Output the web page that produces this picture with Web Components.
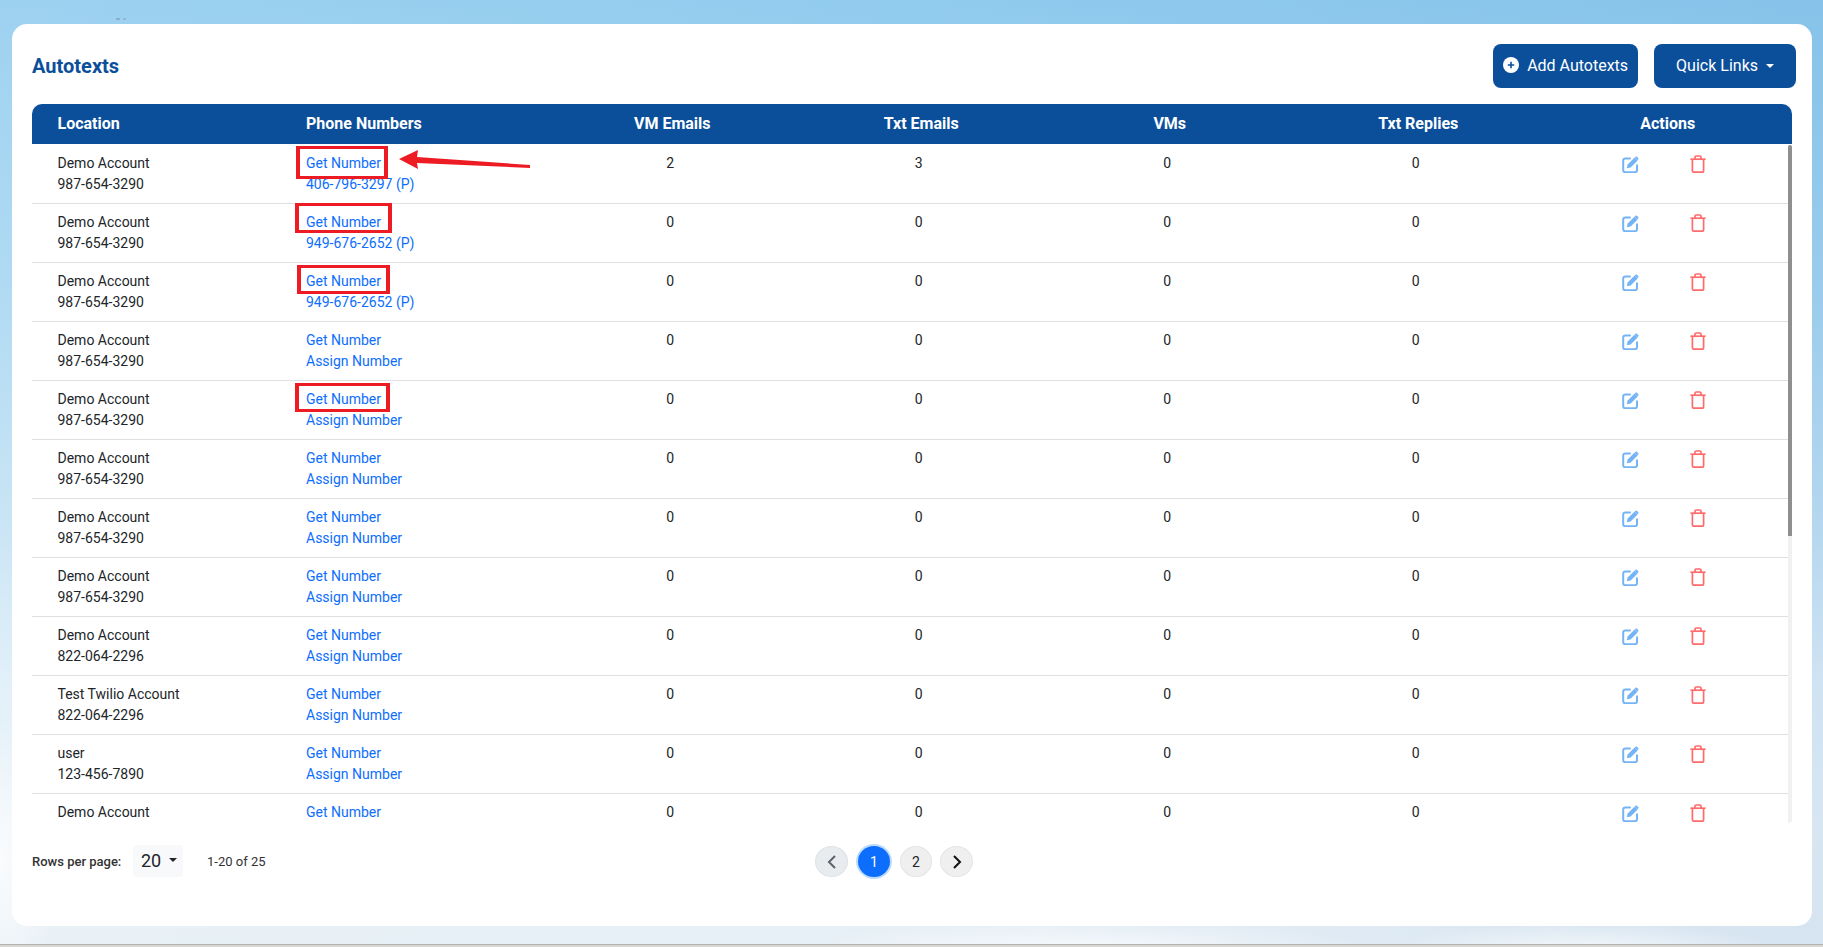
<!DOCTYPE html>
<html>
<head>
<meta charset="utf-8">
<title>Autotexts</title>
<style>
html, body { margin: 0; height: 100%; }
body {
  height: 947px;
  overflow: hidden;
  font-family: Roboto, "Liberation Sans", sans-serif;
  color: #212529;
  background:
    linear-gradient(#b3b3b0, #b3b3b0) 0 944px / 100% 1px no-repeat,
    linear-gradient(#d9d7d3, #d9d7d3) 0 945px / 100% 2px no-repeat,
    linear-gradient(rgba(120,140,160,.5), rgba(120,140,160,.5)) 116px 18px / 4px 2px no-repeat,
    linear-gradient(rgba(120,140,160,.35), rgba(120,140,160,.35)) 123px 18px / 3px 2px no-repeat,
    radial-gradient(ellipse 60px 140px at 0 860px, rgba(255,255,255,.75), rgba(255,255,255,0)),
    radial-gradient(ellipse 300px 30px at 1080px 950px, rgba(255,255,255,.7), rgba(255,255,255,0)),
    radial-gradient(ellipse 200px 26px at 1580px 950px, rgba(255,255,255,.7), rgba(255,255,255,0)),
    linear-gradient(90deg, rgba(255,255,255,.12), rgba(255,255,255,0) 50%, rgba(0,80,170,.07)),
    linear-gradient(180deg, #90cbee 0%, #a5d5f1 30%, #c2e1f4 55%, #deeef8 72%, #e8f1f7 88%, #e6eff6 100%);
}
</style>
</head>
<body>
<at-page>
  <at-card>
    <at-toolbar heading="Autotexts">
      <at-button slot="actions" icon="plus">Add Autotexts</at-button>
      <at-button slot="actions" caret wide>Quick Links</at-button>
    </at-toolbar>
    <at-table id="table"></at-table>
    <at-pager></at-pager>
  </at-card>
</at-page>

<template id="row-tpl">
  <style>
    :host {
      display: grid;
      grid-template-columns: 243.5px repeat(6, 248.5px);
      box-sizing: border-box;
      height: 59px;
      position: relative;
      border-bottom: 1px solid #dfdfe4;
      font-size: 14px;
      line-height: 21px;
    }
    .cell { padding: 8px 0 0 25.5px; }
    .cell + .cell { padding-left: 30.5px; }
    .num { padding: 8px 0 0 44px; text-align: center; }
    .actions { padding: 11px 0 0 104px; display: flex; gap: 52px; align-items: flex-start; }
    a { color: #0d6efd; text-decoration: none; display: block; }
    svg { display: block; }
  </style>
  <div class="cell"><div id="loc"></div><div id="ph"></div></div>
  <div class="cell"><a id="get">Get Number</a><a id="second"></a></div>
  <div class="num" id="vm"></div>
  <div class="num" id="txt"></div>
  <div class="num" id="vms"></div>
  <div class="num" id="rep"></div>
  <div class="actions">
    <svg width="17" height="17" viewBox="0 0 17 17" fill="none" style="margin-left:-.5px">
      <path d="M8 2.4H3.2a2 2 0 0 0-2 2v9.8a2 2 0 0 0 2 2H13a2 2 0 0 0 2-2V9.2" stroke="#74b4f6" stroke-width="2" stroke-linecap="round"/>
      <path d="M4.8 12.2l.8-3.8 7-7 3 3-7 7z" fill="#74b4f6"/>
      <path d="M13.4 .8a1.1 1.1 0 0 1 1.5 0l1.3 1.3a1.1 1.1 0 0 1 0 1.5l-.6.6-2.8-2.8z" fill="#74b4f6"/>
    </svg>
    <svg width="16" height="18" viewBox="0 0 16 18" fill="none" stroke="#ff6b6b" stroke-width="1.7" style="margin-top:-1px;margin-left:-.5px">
      <path d="M.4 4.2h15.2"/>
      <path d="M5 4V2.2A1.2 1.2 0 0 1 6.2 1h3.6A1.2 1.2 0 0 1 11 2.2V4"/>
      <path d="M2.4 4.2v11.6a1.4 1.4 0 0 0 1.4 1.4h8.4a1.4 1.4 0 0 0 1.4-1.4V4.2"/>
    </svg>
  </div>
  <slot></slot>
</template>

<script>
function shadow(el, html) {
  const root = el.attachShadow({mode: 'open'});
  root.innerHTML = html;
  return root;
}

class AtPage extends HTMLElement {
  constructor() {
    super();
    shadow(this, `<style>:host { display: block; padding: 24px 11px 0 12px; }</style><slot></slot>`);
  }
}

class AtCard extends HTMLElement {
  constructor() {
    super();
    shadow(this, `<style>
      :host {
        display: block;
        box-sizing: border-box;
        height: 902px;
        padding: 20px 20px 0 20px;
        background: #fff;
        border-radius: 15px;
      }
    </style><slot></slot>`);
  }
}

class AtToolbar extends HTMLElement {
  connectedCallback() {
    shadow(this, `<style>
      :host { display: flex; align-items: center; justify-content: space-between; height: 44px; margin: 0 -4px 16px 0; }
      h1 { margin: 0; font-size: 20px; font-weight: 700; color: #0b4f9b; }
      div { display: flex; gap: 16px; }
    </style><h1>${this.getAttribute('heading')}</h1><div><slot name="actions"></slot></div>`);
  }
}

class AtButton extends HTMLElement {
  connectedCallback() {
    const plus = this.getAttribute('icon') === 'plus' ? `<svg width="16" height="16" viewBox="0 0 16 16"><circle cx="8" cy="8" r="8" fill="#fff"/><path d="M8 4.8v6.4M4.8 8h6.4" stroke="#0b4f9b" stroke-width="1.6"/></svg>` : '';
    const caret = this.hasAttribute('caret') ? `<i></i>` : '';
    shadow(this, `<style>
      :host {
        display: inline-flex;
        align-items: center;
        box-sizing: border-box;
        height: 44px;
        padding: 0 10px 2px;
        gap: 8px;
        background: #0b4f9b;
        color: #fff;
        font-size: 16px;
        border-radius: 8px;
      }
      :host([wide]) { padding: 0 22px 2px; }
      i { width: 0; height: 0; margin-top: 2px; border: 4.5px solid transparent; border-top-color: #fff; border-bottom: 0; }
    </style>${plus}<slot></slot>${caret}`);
  }
}

class AtTable extends HTMLElement {
  constructor() {
    super();
    const titles = ['VM Emails', 'Txt Emails', 'VMs', 'Txt Replies', 'Actions'];
    shadow(this, `<style>
      :host { display: block; position: relative; width: 1760px; font-size: 16px; }
      .head {
        display: grid;
        grid-template-columns: 243.5px repeat(6, 248.5px);
        box-sizing: border-box;
        height: 40px;
        line-height: 39px;
        background: #0b4f9b;
        color: #fff;
        font-weight: 700;
        border-radius: 10px 10px 0 0;
      }
      .head span { padding-left: 25.5px; }
      .head span + span { padding-left: 30.5px; }
      .head span.c { padding-left: 49px; text-align: center; }
      .head span.c:first-of-type { padding-left: 48px; }
      .head span.c:nth-child(3) { padding-left: 48px; }
      .head span.c:last-child { padding-left: 51px; }
      .body { height: 678px; margin-top: 1px; overflow: hidden; }
      .track {
        position: absolute; right: 0; top: 41px; bottom: 0; width: 4px;
        background: #f1f1f1; border-radius: 0 0 8px 0;
      }
      .thumb { height: 391px; background: #8f8f8f; border-radius: 2px 2px 0 0; }
    </style>
    <div class="head"><span>Location</span><span>Phone Numbers</span>${titles.map(t => `<span class="c">${t}</span>`).join('')}</div>
    <div class="body"><slot></slot></div>
    <div class="track"><div class="thumb"></div></div>`);
  }
}

class AtRow extends HTMLElement {
  connectedCallback() {
    const root = this.attachShadow({mode: 'open'});
    root.appendChild(document.getElementById('row-tpl').content.cloneNode(true));
    const set = (id, name, dflt) => { root.getElementById(id).textContent = this.getAttribute(name) || dflt; };
    set('loc', 'location', 'Demo Account');
    set('ph', 'phone', '987-654-3290');
    set('second', 'second', 'Assign Number');
    set('vm', 'vm', '0');
    set('txt', 'txt', '0');
    set('vms', 'vms', '0');
    set('rep', 'rep', '0');
  }
}

class AtMark extends HTMLElement {
  constructor() {
    super();
    shadow(this, `<style>
      :host { position: absolute; display: block; box-sizing: border-box; border: solid #ed1c24; border-width: 3px 4px; }
    </style>`);
  }
}

class AtPager extends HTMLElement {
  constructor() {
    super();
    shadow(this, `<style>
      :host { display: block; position: relative; height: 32px; margin-top: 22px; font-size: 13px; }
      .left { display: flex; align-items: center; height: 32px; }
      .label { font-weight: 500; color: #333; width: 101px; }
      .select {
        display: flex; align-items: center; gap: 8px; box-sizing: border-box;
        width: 50px; height: 32px; padding: 0 0 2px 8px;
        background: #f8f9fa; border-radius: 4px; font-size: 18px; color: #212529;
      }
      .select i { width: 0; height: 0; border: 4px solid transparent; border-top-color: #212529; border-bottom: 0; }
      .count { margin-left: 24px; color: #333; }
      .pages { position: absolute; left: 783px; top: 1px; display: flex; }
      .pages span {
        display: flex; align-items: center; justify-content: center; box-sizing: border-box;
        width: 32px; height: 31px; border-radius: 50%;
        background: #efefef; border: 1px solid #e4e4e4; font-size: 14px; color: #212529;
      }
      .pages .prev { width: 33px; background: #e9ecef; border-color: #dee2e6; margin-right: 10px; }
      .pages .on {
        background: #0d6efd; border: 0; color: #fff; margin-right: 10px;
        box-shadow: 0 0 0 2px #bcdcfd;
      }
      .pages .two { margin-right: 8px; }
      .pages .next { width: 33px; }
    </style>
    <div class="left">
      <span class="label">Rows per page:</span>
      <div class="select">20<i></i></div>
      <span class="count">1-20 of 25</span>
    </div>
    <div class="pages">
      <span class="prev"><svg width="10" height="14" viewBox="0 0 10 14" fill="none" stroke="#5c636a" stroke-width="2"><path d="M8 1L2 7l6 6"/></svg></span>
      <span class="on">1</span>
      <span class="two">2</span>
      <span class="next"><svg width="10" height="14" viewBox="0 0 10 14" fill="none" stroke="#111" stroke-width="2"><path d="M2 1l6 6-6 6"/></svg></span>
    </div>`);
  }
}

customElements.define('at-page', AtPage);
customElements.define('at-card', AtCard);
customElements.define('at-toolbar', AtToolbar);
customElements.define('at-button', AtButton);
customElements.define('at-table', AtTable);
customElements.define('at-row', AtRow);
customElements.define('at-mark', AtMark);
customElements.define('at-pager', AtPager);

// rows shown in the first page of the list, marks are left/top/width/height inside the row
const rows = [
  {second: '406-796-3297 (P)', vm: '2', txt: '3', mark: [264, 1, 92, 33]},
  {second: '949-676-2652 (P)', mark: [263, -1, 97, 30]},
  {second: '949-676-2652 (P)', mark: [265, 2, 93, 29]},
  {},
  {mark: [263, 2, 95, 29]},
  {}, {}, {},
  {phone: '822-064-2296'},
  {location: 'Test Twilio Account', phone: '822-064-2296'},
  {location: 'user', phone: '123-456-7890'},
  {}
];
const table = document.getElementById('table');
rows.forEach((r, i) => {
  const row = document.createElement('at-row');
  for (const k of ['location', 'phone', 'second', 'vm', 'txt']) {
    if (r[k]) row.setAttribute(k, r[k]);
  }
  if (r.mark) {
    const m = document.createElement('at-mark');
    m.style.cssText = `left:${r.mark[0]}px;top:${r.mark[1]}px;width:${r.mark[2]}px;height:${r.mark[3]}px`;
    row.appendChild(m);
  }
  if (i === 0) {
    row.insertAdjacentHTML('beforeend', `<svg style="position:absolute;left:366px;top:4px" width="134" height="20" viewBox="0 0 134 20"><path d="M1 10L20 1l-1 7 113 8v3L19 14l1 6z" fill="#ed1c24"/></svg>`);
  }
  table.appendChild(row);
});
</script>
</body>
</html>
